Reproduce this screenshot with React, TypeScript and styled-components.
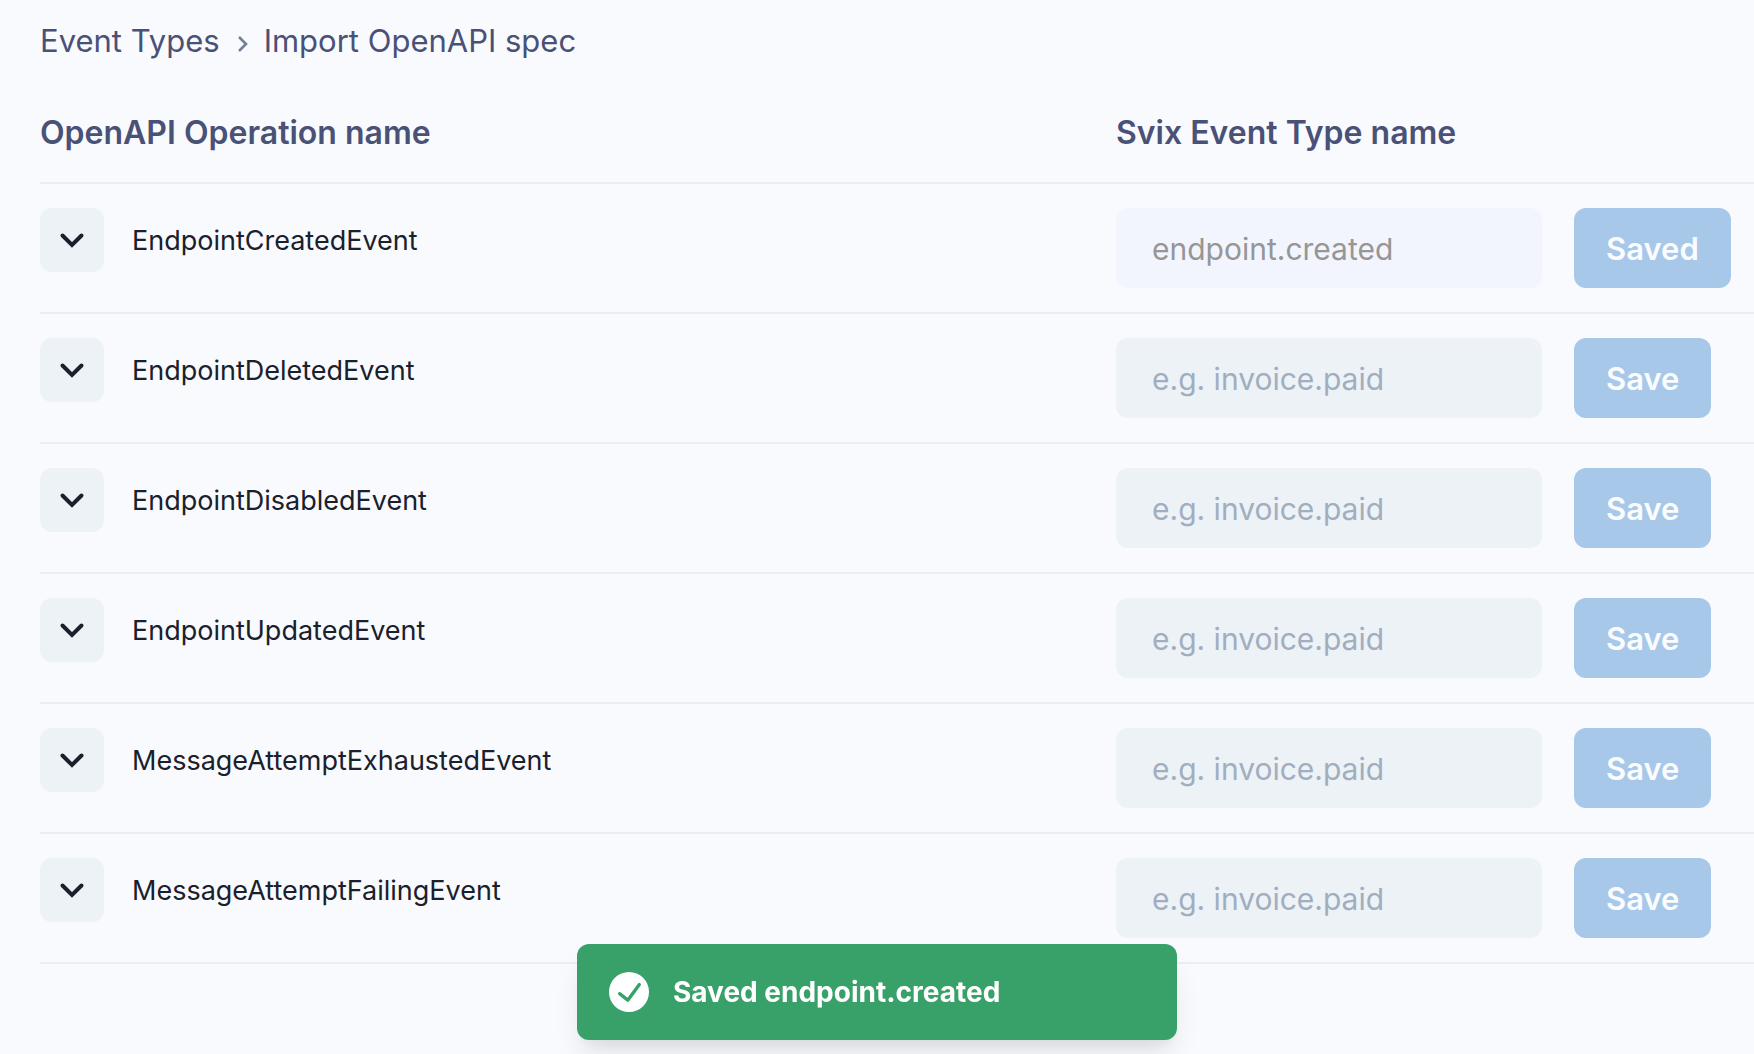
import React, { useId } from "react";
import styled, { createGlobalStyle } from "styled-components";

const GlobalStyle = createGlobalStyle`
  *, *::before, *::after { box-sizing: border-box; }
  html, body { margin: 0; background: #f8fafd; }
  body {
    font-family: Inter, "Liberation Sans", sans-serif;
    color: #1a202c;
    overflow: hidden;
  }
  button, input { font-family: inherit; }
`;

const Page = styled.div`
  min-height: 100vh;
  padding: 20px 0 0 40px;
`;

const Breadcrumb = styled.nav`
  display: flex;
  align-items: center;
  gap: 14px;
  height: 44px;
  font-size: 31px;
  line-height: 42px;
  color: #4a5177;

  svg { color: #718096; }
`;

const Crumb = styled.a`
  height: 44px;
  color: inherit;
  text-decoration: none;
`;

const Table = styled.table`
  width: 100%;
  margin-top: 36px;
  border-collapse: separate;
  border-spacing: 0;
  table-layout: fixed;
`;

const HeadCell = styled.th<{ $width?: string }>`
  width: ${(p) => p.$width ?? "auto"};
  height: 84px;
  padding: 11px 0 27px;
  border-bottom: 2px solid #ebedf3;
  text-align: left;
  font-size: 32px;
  line-height: 44px;
  font-weight: 600;
  color: #4a5177;
`;

const Cell = styled.td`
  padding: 24px 0;
  border-bottom: 2px solid #ebedf3;
  vertical-align: top;
`;

const Operation = styled.div`
  display: flex;
  align-items: center;
  gap: 28px;
  font-size: 27px;
  line-height: 36px;
`;

const OperationName = styled.span`
  padding-top: 2px;
`;

const ExpandButton = styled.button`
  display: flex;
  align-items: center;
  justify-content: center;
  width: 64px;
  height: 64px;
  padding: 0;
  border: 0;
  border-radius: 12px;
  background: #edf2f7;
  color: #1a202c;
`;

const EventForm = styled.form`
  display: flex;
  gap: 32px;
`;

const NameInput = styled.input`
  width: 426px;
  height: 80px;
  padding: 2px 36px 0;
  border: 0;
  border-radius: 12px;
  background: #edf2f7;
  color: #1a202c;
  font-size: 30px;

  &::placeholder { color: #a0aec0; opacity: 1; }
  &:disabled { background: #f2f5fe; color: #969696; }
`;

const SaveButton = styled.button`
  height: 80px;
  padding: 0 32px;
  border: 0;
  border-radius: 12px;
  background: #a8c8ea;
  color: #fafcfe;
  font-size: 31px;
  font-weight: 600;
`;

const Toast = styled.div`
  position: fixed;
  left: 50%;
  bottom: 14px;
  transform: translateX(-50%);
  display: flex;
  align-items: center;
  gap: 24px;
  width: 600px;
  height: 96px;
  padding: 0 32px;
  border-radius: 12px;
  background: #38a169;
  color: #ffffff;
  font-size: 28px;
  line-height: 48px;
  font-weight: 700;
  box-shadow: 0 20px 30px -6px rgba(0, 0, 0, 0.1), 0 8px 12px -4px rgba(0, 0, 0, 0.05);
`;

const ChevronDown = () => (
  <svg width="48" height="48" viewBox="0 0 48 48" fill="none" stroke="currentColor" strokeWidth="4" strokeLinecap="round" aria-hidden="true">
    <path d="M14.5 19.5L24 29 33.5 19.5" />
  </svg>
);

const ChevronRight = () => (
  <svg width="16" height="24" viewBox="0 0 16 24" fill="none" stroke="currentColor" strokeWidth="2.6" aria-hidden="true">
    <path d="M5 7l7 7-7 7" />
  </svg>
);

const CheckCircle = () => (
  <svg width="40" height="40" viewBox="0 0 24 24" fill="currentColor" aria-hidden="true">
    <path d="M12,0A12,12,0,1,0,24,12,12.014,12.014,0,0,0,12,0Zm6.927,8.2-6.845,9.289a1.011,1.011,0,0,1-1.43.188L5.764,13.769a1,1,0,1,1,1.25-1.562l4.076,3.261,6.227-8.451A1,1,0,1,1,18.927,8.2Z" />
  </svg>
);

interface EventRow {
  operation: string;
  savedAs?: string;
}

const rows: EventRow[] = [
  { operation: "EndpointCreatedEvent", savedAs: "endpoint.created" },
  { operation: "EndpointDeletedEvent" },
  { operation: "EndpointDisabledEvent" },
  { operation: "EndpointUpdatedEvent" },
  { operation: "MessageAttemptExhaustedEvent" },
  { operation: "MessageAttemptFailingEvent" },
];

const OperationRow = ({ operation, savedAs }: EventRow) => {
  const id = useId();
  return (
    <tr>
      <Cell>
        <Operation>
          <ExpandButton type="button" aria-expanded={false} aria-labelledby={id}>
            <ChevronDown />
          </ExpandButton>
          <OperationName id={id}>{operation}</OperationName>
        </Operation>
      </Cell>
      <Cell>
        <EventForm onSubmit={(e) => e.preventDefault()}>
          <NameInput
            type="text"
            aria-labelledby={id}
            placeholder="e.g. invoice.paid"
            defaultValue={savedAs}
            disabled={Boolean(savedAs)}
          />
          <SaveButton type="submit" disabled>
            {savedAs ? "Saved" : "Save"}
          </SaveButton>
        </EventForm>
      </Cell>
    </tr>
  );
};

export default function App() {
  return (
    <>
      <GlobalStyle />
      <Page>
        <Breadcrumb aria-label="Breadcrumb">
          <Crumb href="#event-types">Event Types</Crumb>
          <ChevronRight />
          <Crumb href="#import" aria-current="page">Import OpenAPI spec</Crumb>
        </Breadcrumb>
        <Table>
          <thead>
            <tr>
              <HeadCell>OpenAPI Operation name</HeadCell>
              <HeadCell $width="638px">Svix Event Type name</HeadCell>
            </tr>
          </thead>
          <tbody>
            {rows.map((row) => (
              <OperationRow key={row.operation} {...row} />
            ))}
          </tbody>
        </Table>
      </Page>
      <Toast role="status">
        <CheckCircle />
        <span>Saved endpoint.created</span>
      </Toast>
    </>
  );
}
